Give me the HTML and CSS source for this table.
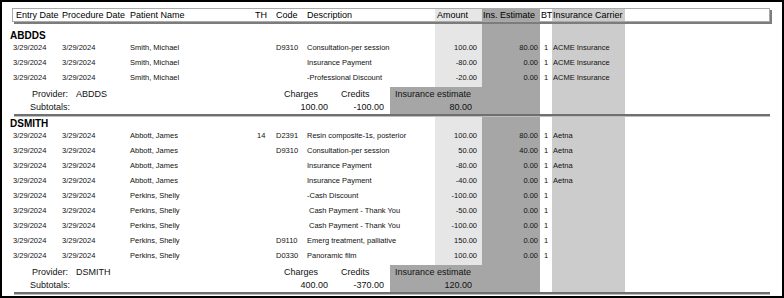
FILE: index.html
```html
<!DOCTYPE html>
<html lang="en">
<head>
<meta charset="utf-8">
<title>Provider Report</title>
<link rel="stylesheet" href="styles.css">
</head>
<body>
<div class="frame">
  <div class="report">
    <div class="head">
      <div class="entry">Entry Date</div>
      <div>Procedure Date</div>
      <div>Patient Name</div>
      <div>TH</div>
      <div>Code</div>
      <div>Description</div>
      <div class="h-amt">Amount</div>
      <div class="h-ins">Ins. Estimate</div>
      <div class="h-bt">BT</div>
      <div class="h-car">Insurance Carrier</div>
    </div>

    <section class="group">
      <div class="title">ABDDS</div>
      <div class="rows">
        <div class="row"><div>3/29/2024</div><div>3/29/2024</div><div>Smith, Michael</div><div class="th"></div><div>D9310</div><div>Consultation-per session</div><div class="amt">100.00</div><div class="ins">80.00</div><div class="bt">1</div><div class="car">ACME Insurance</div></div>
        <div class="row"><div>3/29/2024</div><div>3/29/2024</div><div>Smith, Michael</div><div class="th"></div><div></div><div>Insurance Payment</div><div class="amt">-80.00</div><div class="ins">0.00</div><div class="bt">1</div><div class="car">ACME Insurance</div></div>
        <div class="row"><div>3/29/2024</div><div>3/29/2024</div><div>Smith, Michael</div><div class="th"></div><div></div><div>-Professional Discount</div><div class="amt">-20.00</div><div class="ins">0.00</div><div class="bt">1</div><div class="car">ACME Insurance</div></div>
      </div>
      <div class="prov">
        <div class="p-name"><span class="p-label">Provider:</span>ABDDS</div>
        <div class="p-chg">Charges</div>
        <div class="p-crd">Credits</div>
        <div></div>
        <div class="p-ins">Insurance estimate</div>
        <div></div>
        <div class="p-sub">Subtotals:</div>
        <div class="v-chg">100.00</div>
        <div class="v-crd">-100.00</div>
        <div></div>
        <div class="v-ins">80.00</div>
        <div></div>
      </div>
      <div class="sep"></div>
    </section>

    <section class="group">
      <div class="title">DSMITH</div>
      <div class="rows">
        <div class="row"><div>3/29/2024</div><div>3/29/2024</div><div>Abbott, James</div><div class="th">14</div><div>D2391</div><div>Resin composite-1s, posterior</div><div class="amt">100.00</div><div class="ins">80.00</div><div class="bt">1</div><div class="car">Aetna</div></div>
        <div class="row"><div>3/29/2024</div><div>3/29/2024</div><div>Abbott, James</div><div class="th"></div><div>D9310</div><div>Consultation-per session</div><div class="amt">50.00</div><div class="ins">40.00</div><div class="bt">1</div><div class="car">Aetna</div></div>
        <div class="row"><div>3/29/2024</div><div>3/29/2024</div><div>Abbott, James</div><div class="th"></div><div></div><div>Insurance Payment</div><div class="amt">-80.00</div><div class="ins">0.00</div><div class="bt">1</div><div class="car">Aetna</div></div>
        <div class="row"><div>3/29/2024</div><div>3/29/2024</div><div>Abbott, James</div><div class="th"></div><div></div><div>Insurance Payment</div><div class="amt">-40.00</div><div class="ins">0.00</div><div class="bt">1</div><div class="car">Aetna</div></div>
        <div class="row"><div>3/29/2024</div><div>3/29/2024</div><div>Perkins, Shelly</div><div class="th"></div><div></div><div>-Cash Discount</div><div class="amt">-100.00</div><div class="ins">0.00</div><div class="bt">1</div><div class="car"></div></div>
        <div class="row"><div>3/29/2024</div><div>3/29/2024</div><div>Perkins, Shelly</div><div class="th"></div><div></div><div class="ind">Cash Payment - Thank You</div><div class="amt">-50.00</div><div class="ins">0.00</div><div class="bt">1</div><div class="car"></div></div>
        <div class="row"><div>3/29/2024</div><div>3/29/2024</div><div>Perkins, Shelly</div><div class="th"></div><div></div><div class="ind">Cash Payment - Thank You</div><div class="amt">-100.00</div><div class="ins">0.00</div><div class="bt">1</div><div class="car"></div></div>
        <div class="row"><div>3/29/2024</div><div>3/29/2024</div><div>Perkins, Shelly</div><div class="th"></div><div>D9110</div><div>Emerg treatment, palliative</div><div class="amt">150.00</div><div class="ins">0.00</div><div class="bt">1</div><div class="car"></div></div>
        <div class="row"><div>3/29/2024</div><div>3/29/2024</div><div>Perkins, Shelly</div><div class="th"></div><div>D0330</div><div>Panoramic film</div><div class="amt">100.00</div><div class="ins">0.00</div><div class="bt">1</div><div class="car"></div></div>
      </div>
      <div class="prov">
        <div class="p-name"><span class="p-label">Provider:</span>DSMITH</div>
        <div class="p-chg">Charges</div>
        <div class="p-crd">Credits</div>
        <div></div>
        <div class="p-ins">Insurance estimate</div>
        <div></div>
        <div class="p-sub">Subtotals:</div>
        <div class="v-chg">400.00</div>
        <div class="v-crd">-370.00</div>
        <div></div>
        <div class="v-ins">120.00</div>
        <div></div>
      </div>
      <div class="sep"></div>
    </section>
  </div>
</div>
</body>
</html>
```
FILE: styles.css
```css
html, body {
  margin: 0;
  padding: 0;
  background: #fff;
}

body {
  font-family: "Liberation Sans", Arial, Helvetica, sans-serif;
  color: #000;
}

.frame {
  box-sizing: border-box;
  width: 784px;
  height: 298px;
  border: 2px solid #000;
  overflow: hidden;
  background: #fff;
}

.report {
  margin-top: 6px;
  width: 780px;
  background: linear-gradient(to right,
    #fff 0 433px,
    #e6e6e6 433px 480px,
    #a6a6a6 480px 538px,
    #fff 538px 550px,
    #cccccc 550px 623px,
    #fff 623px);
}

/* column header box */
.head {
  box-sizing: border-box;
  margin-left: 10px;
  margin-bottom: 7px;
  width: 758px;
  height: 14px;
  border: 1px solid #a9a9a9;
  box-shadow: 2px 2px 0 #7c7c7c;
  display: grid;
  grid-template-columns: 49px 68px 125px 21px 31px 128px 47px 58px 12px 73px;
  font-size: 9px;
  line-height: 12px;
  white-space: nowrap;
  color: #000;
}

.head .entry { padding-left: 3px; }
.head .h-amt { padding-left: 2px; }
.head .h-ins { padding-left: 1px; }
.head .h-bt { padding-left: 1px; letter-spacing: -0.3px; }
.head .h-car { padding-left: 1px; }

/* provider group */
.title {
  padding: 2px 0 0 8px;
  font-size: 10px;
  font-weight: bold;
  line-height: 9px;
  height: 9px;
}

.rows {
  padding-bottom: 2px;
}

.row {
  display: grid;
  padding-left: 11px;
  grid-template-columns: 49px 68px 125px 21px 31px 128px 47px 58px 12px 73px;
  height: 15px;
  font-size: 7.5px;
  line-height: 15px;
  color: #111;
  white-space: nowrap;
}

.row .th { padding-left: 2px; }
.row .amt { text-align: right; padding-right: 5px; }
.row .ins { text-align: right; padding-right: 2px; }
.row .bt { text-align: center; }
.row .car { padding-left: 1px; }
.row .ind { padding-left: 2px; }

/* subtotals block */
.prov {
  display: grid;
  grid-template-columns: 280px 46px 56px 6px 150px 1fr;
  grid-auto-rows: 13px;
  padding-top: 1px;
  font-size: 9px;
  line-height: 13px;
  white-space: nowrap;
  color: #111;
  background: linear-gradient(to right,
    #fff 0 388px,
    #a6a6a6 388px 538px,
    #fff 538px 550px,
    #cccccc 550px 623px,
    #fff 623px);
}

.p-name { padding-left: 30px; }
.p-label { display: inline-block; width: 44px; }
.p-sub { padding-left: 28px; }
.p-chg { padding-left: 2px; }
.p-crd { padding-left: 13px; }
.p-ins { padding-left: 5px; }
.v-chg, .v-crd { text-align: right; }
.v-ins { text-align: right; padding-right: 68px; }

.sep {
  height: 2px;
  margin: 0 12px;
  background: #6f6f6f;
  border-bottom: 1px solid #bdbdbd;
}
```
